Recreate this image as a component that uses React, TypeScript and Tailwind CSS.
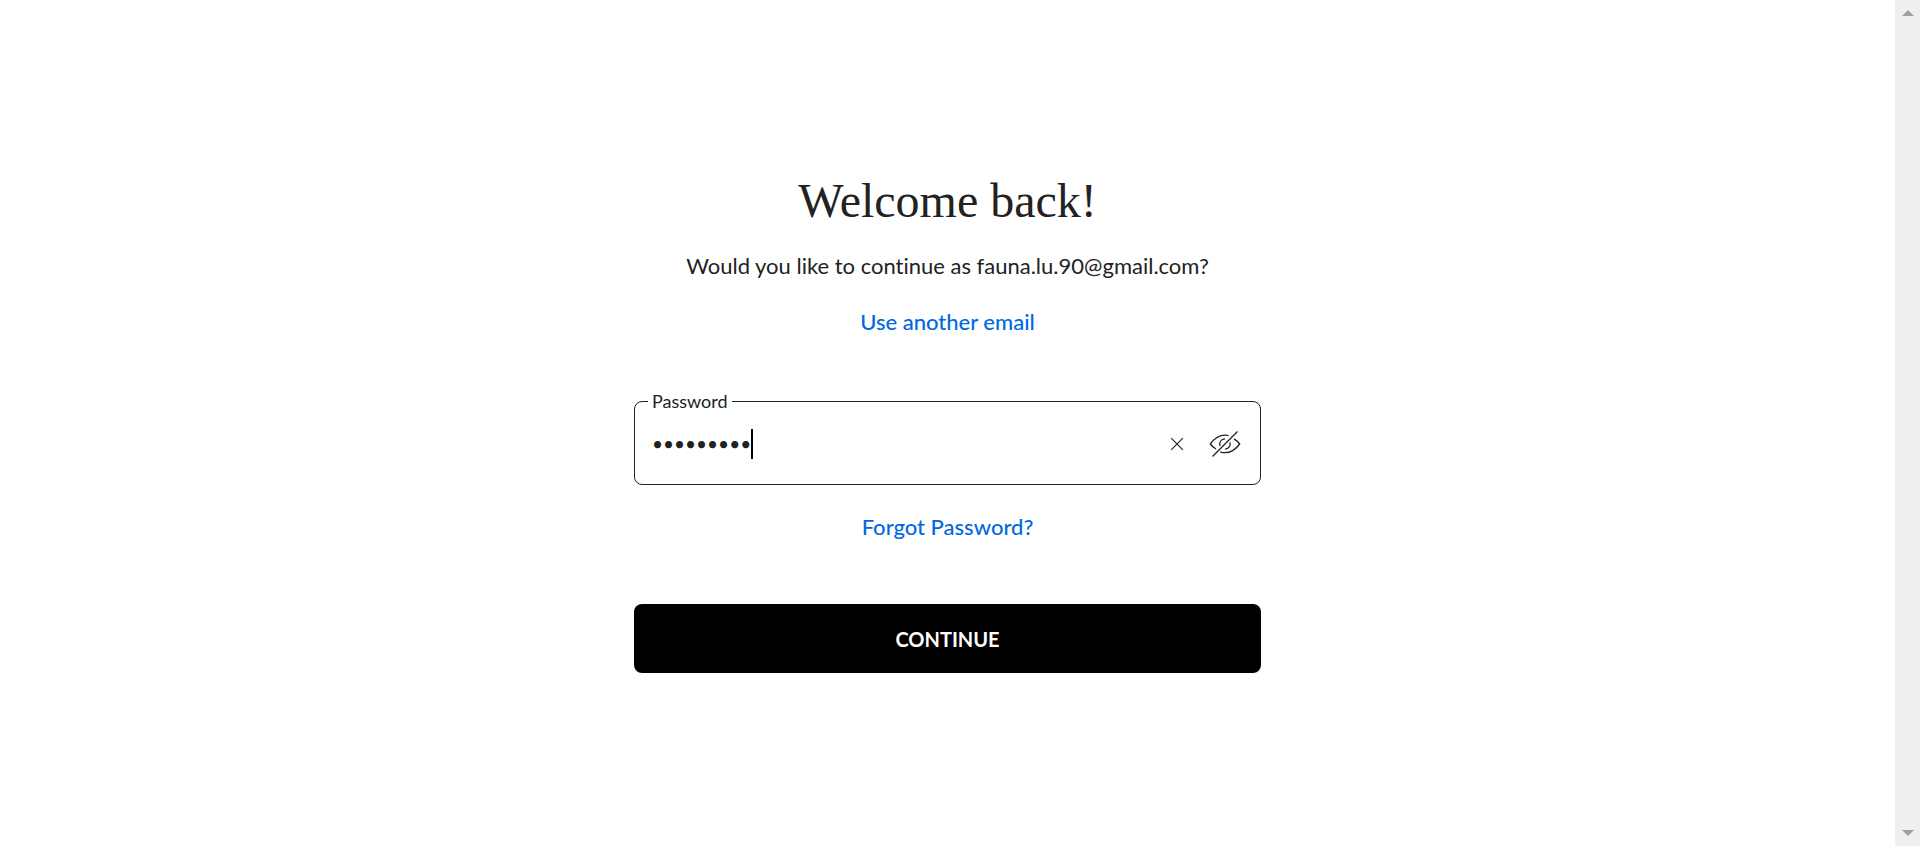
import { useState } from "react";

function ClearIcon() {
  return (
    <svg viewBox="0 0 14 14" className="size-3.5" fill="none" stroke="#222" strokeWidth="1.2" aria-hidden="true">
      <path d="M1.2 1.2l11.6 11.6M12.8 1.2L1.2 12.8" />
    </svg>
  );
}

function EyeOffIcon() {
  return (
    <svg viewBox="0 0 32 28" className="h-7 w-8" fill="none" stroke="#222" strokeWidth="1.3" aria-hidden="true">
      <path d="M28.5 1.5L3.5 26.5" />
      <path d="M19.5 5.7C18.3 5.3 17 5.2 16 5.2C10 5.2 4.5 9.6 1.3 14C2.9 16 4.8 17.700 7 19" />
      <path d="M25 8.900C27.300 10.300 29.300 12.200 30.700 14C27.500 18.300 22 22.700 16 22.700C14.300 22.700 12.700 22.400 11.300 21.800" />
      <path d="M16 8.8C13 9 10.700 11.300 10.700 14.200C10.700 14.900 10.800 15.400 11 16" />
      <path d="M21 12.400C21.800 15.800 19.700 18.900 16 19.200" />
    </svg>
  );
}

function ScrollTrack() {
  return (
    <div className="flex w-[25px] shrink-0 flex-col items-center justify-between bg-[#efefef] py-2.5" aria-hidden="true">
      <svg viewBox="0 0 12 6" className="h-1.5 w-3" fill="#a0a0a0">
        <path d="M6 0l6 6H0z" />
      </svg>
      <svg viewBox="0 0 12 6" className="h-1.5 w-3" fill="#a0a0a0">
        <path d="M0 0h12L6 6z" />
      </svg>
    </div>
  );
}

export default function App() {
  const [password, setPassword] = useState("fauna1990");
  const [visible, setVisible] = useState(false);

  return (
    <div className="flex min-h-screen bg-white font-['Lato','Liberation_Sans',sans-serif] text-[#222] [font-variant-ligatures:none]">
      <main className="flex flex-1 justify-center px-4 pt-[168px] pb-16">
        <form className="flex w-full max-w-[627px] flex-col items-center" onSubmit={(e) => e.preventDefault()}>
          <h1 className="font-['Liberation_Serif',serif] text-[48px] leading-[66px]">Welcome back!</h1>
          <p className="mt-[18px] text-[22px] leading-7">Would you like to continue as fauna.lu.90@gmail.com?</p>
          <a href="#email" className="mt-7 text-[22px] leading-7 font-medium text-[#0068e0]">
            Use another email
          </a>

          <fieldset className="mt-14 w-full rounded-lg border border-[#222] px-[13px]">
            <legend className="px-1 text-lg leading-[18px]">
              <label htmlFor="password">Password</label>
            </legend>
            <div className="flex h-[74px] items-center pb-1.5">
              <div className="relative flex-1">
                <input
                  id="password"
                  type={visible ? "text" : "password"}
                  value={password}
                  onChange={(e) => setPassword(e.target.value)}
                  className="block h-[30px] w-full bg-transparent px-1 text-[19px] leading-[30px] outline-none"
                />
                <span className="absolute top-0 left-[103px] h-[30px] w-0.5 bg-black" aria-hidden="true" />
              </div>
              <button type="button" aria-label="Clear password" className="mr-[25px]" onClick={() => setPassword("")}>
                <ClearIcon />
              </button>
              <button type="button" aria-label="Show password" className="mr-1.5" onClick={() => setVisible(!visible)}>
                <EyeOffIcon />
              </button>
            </div>
          </fieldset>

          <a href="#forgot" className="mt-7 text-[22px] leading-7 font-medium text-[#0068e0]">
            Forgot Password?
          </a>
          <button type="submit" className="mt-[63px] h-[69px] w-full rounded-lg bg-black text-xl font-bold text-white">
            CONTINUE
          </button>
        </form>
      </main>
      <ScrollTrack />
    </div>
  );
}
